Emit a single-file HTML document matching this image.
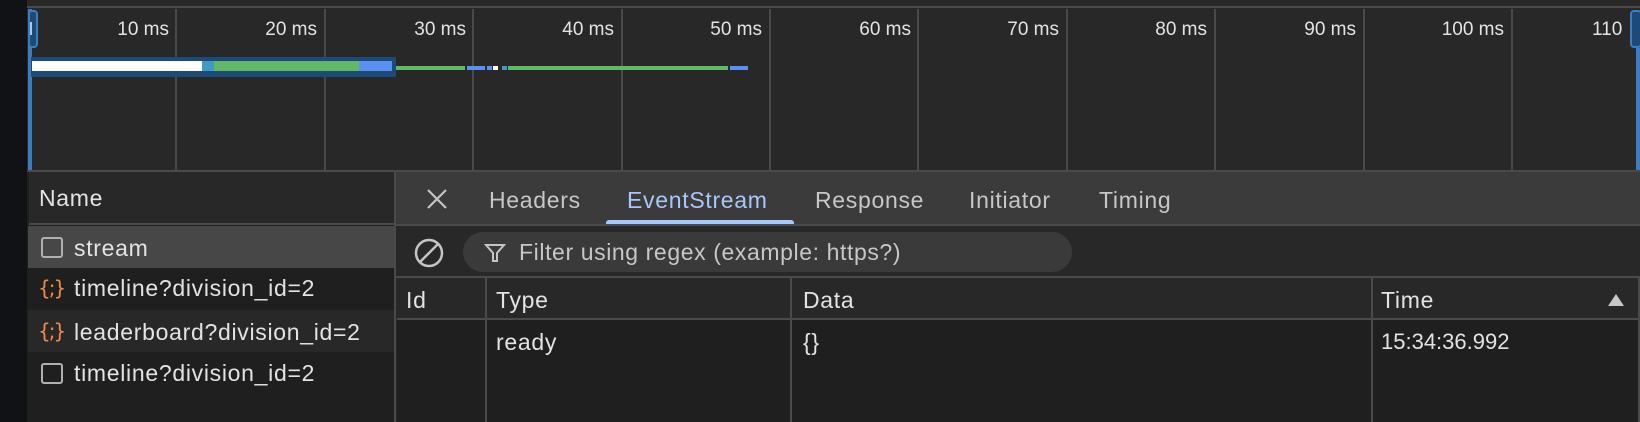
<!DOCTYPE html><html><head><style>
*{margin:0;padding:0;box-sizing:border-box}
body{width:1640px;height:422px;background:#282828;position:relative;overflow:hidden;font-family:"Liberation Sans",sans-serif;color:#e3e3e3}
.a{position:absolute}
.g{position:absolute;top:9px;height:162px;width:2px;background:#4a4a4a}
.lb{position:absolute;top:19px;font-size:19px;color:#e3e3e3;text-align:right;width:120px}
.t{font-size:23px;line-height:26px;position:absolute;white-space:nowrap;letter-spacing:0.7px}
.b{position:absolute;height:4px;top:66px}
.ic{position:absolute;font-size:20px;line-height:26px;color:#f08a4b;font-family:'DejaVu Sans',sans-serif;letter-spacing:-2px}
</style></head><body>
<div class="a" style="left:0;top:0;width:27px;height:422px;background:#111215"></div>
<div class="a" style="left:27px;top:0;width:1613px;height:8px;background:#282828;border-bottom:2px solid #4a4a4a"></div>
<div class="g" style="left:175px"></div><div class="g" style="left:324px"></div><div class="g" style="left:472px"></div><div class="g" style="left:621px"></div><div class="g" style="left:769px"></div><div class="g" style="left:917px"></div><div class="g" style="left:1066px"></div><div class="g" style="left:1214px"></div><div class="g" style="left:1363px"></div><div class="g" style="left:1511px"></div>
<div class="lb" style="left:49px">10 ms</div><div class="lb" style="left:197px">20 ms</div><div class="lb" style="left:346px">30 ms</div><div class="lb" style="left:494px">40 ms</div><div class="lb" style="left:642px">50 ms</div><div class="lb" style="left:791px">60 ms</div><div class="lb" style="left:939px">70 ms</div><div class="lb" style="left:1087px">80 ms</div><div class="lb" style="left:1236px">90 ms</div><div class="lb" style="left:1384px">100 ms</div><div class="a" style="left:1592px;top:19px;font-size:19px">110</div>
<div class="a" style="left:28px;top:9px;width:4px;height:162px;background:#3a7dc0"></div>
<div class="a" style="left:28px;top:10px;width:10px;height:38px;background:#1e4a78;border:2px solid #3a7dc0;border-radius:4px"></div>
<div class="a" style="left:30px;top:22px;width:2px;height:13px;background:#a8c7fa"></div>
<div class="a" style="left:1630px;top:10px;width:12px;height:38px;background:#1e4a78;border:2px solid #3a7dc0;border-radius:4px"></div>
<div class="a" style="left:1636px;top:48px;width:4px;height:123px;background:#3a7dc0"></div>
<div class="a" style="left:31px;top:57px;width:365px;height:20px;background:#1e4a78"></div>
<div class="a" style="left:32px;top:61px;width:170px;height:10px;background:#fff"></div>
<div class="a" style="left:202px;top:61px;width:12px;height:10px;background:#4299c4"></div>
<div class="a" style="left:214px;top:61px;width:145px;height:10px;background:#61b968"></div>
<div class="a" style="left:359px;top:61px;width:33px;height:10px;background:#5b8ff0"></div>
<div class="b" style="left:396px;width:69px;background:#61b968"></div>
<div class="b" style="left:467px;width:18px;background:#5b8ff0"></div>
<div class="b" style="left:487px;width:5px;background:#5b8ff0"></div>
<div class="b" style="left:493px;width:5px;background:#fff"></div>
<div class="b" style="left:502px;width:5px;background:#4299c4"></div>
<div class="b" style="left:508px;width:220px;background:#61b968"></div>
<div class="b" style="left:730px;width:18px;background:#5b8ff0"></div>
<!-- left panel -->
<div class="a" style="left:27px;top:170px;width:368px;height:252px;background:#1f1f1f;border-top:2px solid #4a4a4a"></div>
<div class="a" style="left:29px;top:172px;width:365px;height:53px;background:#282828;border-bottom:2px solid #4a4a4a"></div>
<div class="t" style="left:39px;top:185px">Name</div>
<div class="a" style="left:28px;top:226px;width:366px;height:42px;background:#474747"></div>
<div class="a" style="left:28px;top:310px;width:366px;height:42px;background:#282828"></div>
<div class="a" style="left:41px;top:237px;width:22px;height:21px;border:2px solid #b0b0b0;border-radius:3px"></div>
<div class="a" style="left:41px;top:363px;width:22px;height:21px;border:2px solid #b0b0b0;border-radius:3px"></div>
<div class="ic" style="left:38px;top:275px">{;}</div>
<div class="ic" style="left:38px;top:318px">{;}</div>
<div class="t" style="left:74px;top:235px">stream</div>
<div class="t" style="left:74px;top:275px">timeline?division_id=2</div>
<div class="t" style="left:74px;top:319px">leaderboard?division_id=2</div>
<div class="t" style="left:74px;top:360px">timeline?division_id=2</div>
<div class="a" style="left:394px;top:170px;width:2px;height:252px;background:#4a4a4a"></div>
<!-- right panel -->
<div class="a" style="left:396px;top:170px;width:1244px;height:56px;background:#3b3b3b;border-top:2px solid #4a4a4a;border-bottom:2px solid #4a4a4a"></div>
<svg class="a" style="left:426px;top:188px" width="22" height="22"><path d="M2 2L20 20M20 2L2 20" stroke="#c4c4c4" stroke-width="2.2"/></svg>
<div class="t" style="left:489px;top:187px;color:#c7c7c7">Headers</div>
<div class="t" style="left:627px;top:187px;color:#a8c7fa">EventStream</div>
<div class="a" style="left:606px;top:220px;width:188px;height:4px;background:#a8c7fa;border-radius:3px 3px 0 0"></div>
<div class="t" style="left:815px;top:187px;color:#c7c7c7">Response</div>
<div class="t" style="left:969px;top:187px;color:#c7c7c7">Initiator</div>
<div class="t" style="left:1099px;top:187px;color:#c7c7c7">Timing</div>
<div class="a" style="left:396px;top:226px;width:1244px;height:52px;background:#282828;border-bottom:2px solid #4a4a4a"></div>
<svg class="a" style="left:413px;top:237px" width="32" height="32"><circle cx="16" cy="16" r="13" fill="none" stroke="#c4c4c4" stroke-width="2.5"/><path d="M7 25L25 7" stroke="#c4c4c4" stroke-width="2.5"/></svg>
<div class="a" style="left:463px;top:232px;width:609px;height:40px;background:#3a3a3a;border-radius:20px"></div>
<svg class="a" style="left:484px;top:243px" width="22" height="20"><path d="M2 2H20L13 10V18H9V10Z" fill="none" stroke="#c4c4c4" stroke-width="2"/></svg>
<div class="t" style="left:519px;top:239px;color:#c7c7c7;letter-spacing:0.6px">Filter using regex (example: https?)</div>
<div class="a" style="left:397px;top:278px;width:1241px;height:144px;background:#1f1f1f"></div>
<div class="a" style="left:397px;top:278px;width:1241px;height:42px;background:#282828;border-bottom:2px solid #4a4a4a"></div>
<div class="a" style="left:485px;top:278px;width:2px;height:144px;background:#4a4a4a"></div>
<div class="a" style="left:790px;top:278px;width:2px;height:144px;background:#4a4a4a"></div>
<div class="a" style="left:1371px;top:278px;width:2px;height:144px;background:#4a4a4a"></div>
<div class="a" style="left:1638px;top:278px;width:2px;height:144px;background:#4a4a4a"></div>
<div class="t" style="left:406px;top:287px">Id</div>
<div class="t" style="left:496px;top:287px">Type</div>
<div class="t" style="left:803px;top:287px">Data</div>
<div class="t" style="left:1381px;top:287px">Time</div>
<div class="a" style="left:1608px;top:294px;width:0;height:0;border-left:8px solid transparent;border-right:8px solid transparent;border-bottom:12px solid #c7c7c7"></div>
<div class="t" style="left:496px;top:329px">ready</div>
<div class="t" style="left:803px;top:329px">{}</div>
<div class="t" style="left:1381px;top:329px;font-size:22px;letter-spacing:0">15:34:36.992</div>
</body></html>
